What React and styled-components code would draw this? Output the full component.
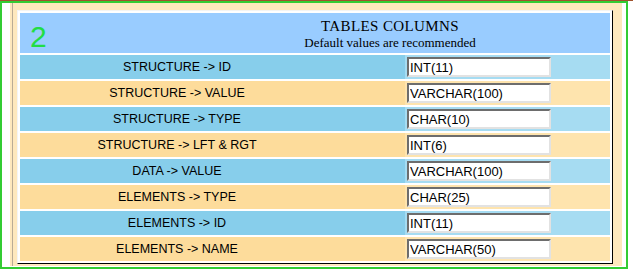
import React from 'react';
import styled, { createGlobalStyle } from 'styled-components';

const Global = createGlobalStyle`
  html, body { margin: 0; padding: 0; background: #fff; }
  body { width: 633px; height: 270px; overflow: hidden; }
`;

const Page = styled.div`
  width: 633px;
  height: 270px;
  box-sizing: border-box;
  border-top: 1px solid #a0522d;
  background: #fff;
`;

const GreenBox = styled.div`
  width: 628px;
  height: 268px;
  box-sizing: border-box;
  border: 2px solid #33cc33;
  padding: 0 4px 1px 8px;
  display: flex;
`;

const Panel = styled.div`
  flex: 1;
  background: #fee8bd;
  padding: 7px 9px 2px 7px;
  box-shadow: inset 2px 0 0 #fee8bd, inset 3px 0 0 #b9ab95;
`;

const Table = styled.div`
  width: 596px;
  box-sizing: border-box;
  display: flex;
  flex-direction: column;
  gap: 2px;
  padding: 2px;
  border: 1px solid;
  border-color: #f4f4f4 #000 #000 #f4f4f4;
  background: #fff;
`;

const Header = styled.div`
  height: 40px;
  background: #99ccff;
  display: flex;
`;

const Badge = styled.div`
  width: 150px;
  box-sizing: border-box;
  padding: 9px 0 0 10px;
  font: 30px/30px "Liberation Sans", Arial, sans-serif;
  color: #22dd44;
`;

const Titles = styled.div`
  flex: 1;
  display: flex;
  flex-direction: column;
  align-items: center;
  padding-top: 4px;
  font-family: "Liberation Serif", "Times New Roman", serif;
  color: #000;
`;

const Title = styled.div`
  font-size: 15px;
  line-height: 18px;
  letter-spacing: 0.4px;
`;

const Subtitle = styled.div`
  font-size: 13px;
  line-height: 16px;
`;

const Row = styled.div`
  height: 24px;
  display: flex;
`;

const Label = styled.div`
  width: 385px;
  box-sizing: border-box;
  padding-right: 71px;
  background: ${p => (p.$tone === 'blue' ? '#87ceeb' : '#fddc9b')};
  text-align: center;
  font: 12.5px/25px "Liberation Sans", Arial, sans-serif;
  color: #000;
`;

const Value = styled.div`
  flex: 1;
  padding: 2px;
  background: ${p => (p.$tone === 'blue' ? '#a6dcf2' : '#fee4ae')};
`;

const Field = styled.input`
  display: block;
  width: 144px;
  height: 20px;
  box-sizing: border-box;
  margin: 0;
  padding: 0 0 0 1px;
  border: 2px solid;
  border-color: #6d6d6d #e2e2e2 #e2e2e2 #6d6d6d;
  background: #fff;
  font: 13px "Liberation Sans", Arial, sans-serif;
  color: #000;
  outline: none;
`;

const rows = [
  ['STRUCTURE -> ID', 'INT(11)'],
  ['STRUCTURE -> VALUE', 'VARCHAR(100)'],
  ['STRUCTURE -> TYPE', 'CHAR(10)'],
  ['STRUCTURE -> LFT & RGT', 'INT(6)'],
  ['DATA -> VALUE', 'VARCHAR(100)'],
  ['ELEMENTS -> TYPE', 'CHAR(25)'],
  ['ELEMENTS -> ID', 'INT(11)'],
  ['ELEMENTS -> NAME', 'VARCHAR(50)'],
];

export default function App() {
  return (
    <Page>
      <Global />
      <GreenBox>
        <Panel>
          <Table>
            <Header>
              <Badge>2</Badge>
              <Titles>
                <Title>TABLES COLUMNS</Title>
                <Subtitle>Default values are recommended</Subtitle>
              </Titles>
            </Header>
            {rows.map(([label, value], i) => {
              const tone = i % 2 === 0 ? 'blue' : 'beige';
              return (
                <Row key={label}>
                  <Label $tone={tone}>{label}</Label>
                  <Value $tone={tone}>
                    <Field defaultValue={value} />
                  </Value>
                </Row>
              );
            })}
          </Table>
        </Panel>
      </GreenBox>
    </Page>
  );
}
